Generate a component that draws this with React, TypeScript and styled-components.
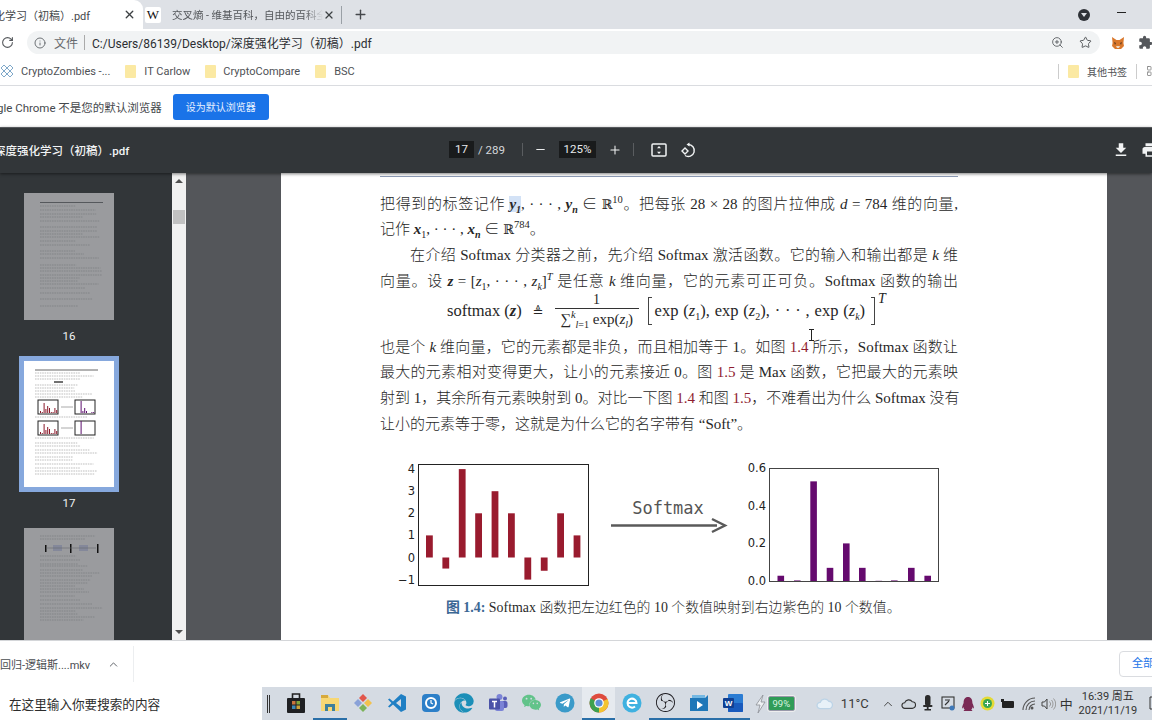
import React from "react";
import styled, { createGlobalStyle } from "styled-components";
import { Info, Plus, RotateCw, Star, X, ZoomIn, ChevronUp, Minus, LayoutGrid } from "lucide-react";
import { MdExtension, MdFileDownload, MdPrint } from "react-icons/md";
import { FaTelegramPlane, FaEdge } from "react-icons/fa";
import { SiObsstudio, SiWechat, SiTencentqq } from "react-icons/si";

const UI = `Roboto, "Noto Sans CJK SC", sans-serif`;
const SERIF = `"Liberation Serif", "Noto Sans CJK SC", serif`;

const Global = createGlobalStyle`
  html, body { margin: 0; padding: 0; width: 1152px; height: 720px; overflow: hidden; background: #fff; }
  * { box-sizing: border-box; }
  sub, sup { line-height: 0; }
`;
const Screen = styled.div`
  width: 1152px; height: 720px; overflow: hidden; display: flex; flex-direction: column; font-family: ${UI}; color: #3c4043;
`;

/* tab strip */
const TabStrip = styled.div`
  height: 29px; flex: none; background: #dee1e6; display: flex; align-items: center;
`;
const ActiveTab = styled.div`
  width: 143px; height: 29px; background: #fff; border-top-right-radius: 9px; display: flex; align-items: center; overflow: hidden; flex: none;
`;
const TabTitle = styled.span<{ $off?: number }>`
  font-size: 11px; color: #45484c; white-space: nowrap; width: 124px; margin-left: ${(p) => p.$off ?? 0}px; flex: none;
`;
const ActiveClose = styled(X)`
  flex: none; color: #3c4043; margin-left: 38px;
`;
const CloseIcon = styled(X)`
  flex: none; color: #3c4043;
`;
const WikiIcon = styled.span`
  width: 16px; height: 16px; margin-left: 1px; background: #fff; font: 13px/16px "Liberation Serif", serif; color: #111; text-align: center; flex: none; border-radius: 2px;
`;
const SecondTab = styled.div`
  width: 199px; height: 29px; display: flex; align-items: center; flex: none; margin-left: 1px;
`;
const FadedTitle = styled.span`
  font-size: 10.5px; color: #54575b; white-space: nowrap; width: 151px; margin-left: 11px; flex: none; overflow: hidden;
  -webkit-mask-image: linear-gradient(90deg, #000 88%, transparent);
  mask-image: linear-gradient(90deg, #000 88%, transparent);
`;
const TabDivider = styled.span`
  width: 1px; height: 18px; background: #9aa0a6; margin-left: 6px; flex: none;
`;
const NewTab = styled(Plus)`
  margin-left: 11px; color: #45484c; flex: none;
`;
const ProfileDot = styled.span`
  margin-left: auto; width: 12px; height: 12px; border-radius: 50%; background: #2f3237; display: flex; align-items: center; justify-content: center; flex: none;
  &::after { content: ""; border: 3px solid transparent; border-top: 4px solid #dee1e6; margin-top: 4px; }
`;
const WinMin = styled.span`
  width: 9px; height: 1px; background: #222; margin: 0 26px 4px 27px; flex: none;
`;

/* omnibox row */
const Toolbar = styled.div`
  height: 28px; flex: none; background: #fff; display: flex; align-items: center; padding-bottom: 1px;
`;
const Reload = styled(RotateCw)`
  margin-left: 1px; color: #55585c; flex: none;
`;
const Omnibox = styled.div`
  margin-left: 13px; width: 1073px; height: 23px; border-radius: 12px; background: #f1f3f4; display: flex; align-items: center; padding-left: 7px; flex: none;
`;
const InfoIcon = styled(Info)`
  color: #5f6368; flex: none;
`;
const Scheme = styled.span`
  font-size: 12px; color: #66696d; margin-left: 8px;
`;
const OmniSep = styled.span`
  width: 1px; height: 15px; background: #aaa; margin: 0 7px 0 6px;
`;
const Url = styled.span`
  font-size: 12px; color: #2b2e32; white-space: nowrap;
`;
const OmniRight = styled.span`
  margin-left: auto; display: flex; align-items: center; gap: 15px; padding-right: 8px; color: #55585c;
`;
const Puzzle = styled(MdExtension)`
  color: #55585c; margin-left: 13px; flex: none;
`;
const FoxBox = styled.svg`
  margin-left: 11px; flex: none;
`;

/* bookmarks */
const Bookmarks = styled.div`
  height: 29px; flex: none; background: #fff; border-bottom: 1px solid #dadce0; display: flex; align-items: center;
`;
const Mark = styled.span<{ $gap?: number; $small?: boolean }>`
  font-size: ${(p) => (p.$small ? 10 : 11)}px; color: #4e5155; margin-left: ${(p) => p.$gap ?? 8}px; white-space: nowrap; flex: none;
`;
const Folder = styled.span<{ $gap?: number }>`
  width: 11px; height: 13px; background: #fbe9a3; border-radius: 1px; margin-left: ${(p) => p.$gap ?? 15}px; flex: none;
`;
const BarSep = styled.span<{ $auto?: boolean; $gap?: number }>`
  width: 1px; height: 15px; background: #ccc; flex: none; margin-left: ${(p) => (p.$auto ? "auto" : `${p.$gap ?? 8}px`)};
`;
const AppsIcon = styled(LayoutGrid)`
  color: #777; margin: 0 -6px 0 9px; flex: none;
`;

/* infobar */
const InfoBar = styled.div`
  height: 41px; flex: none; background: #fff; display: flex; align-items: center; overflow: hidden;
`;
const InfoText = styled.span`
  font-size: 11.5px; color: #45484c; margin-left: -24px; white-space: nowrap; flex: none;
`;
const DefaultBtn = styled.span`
  margin-left: 11px; width: 96px; height: 26px; background: #1a73e8; border-radius: 3px; color: #e6f0ff; font-size: 10px; display: flex; align-items: center; justify-content: center; flex: none;
`;

/* pdf toolbar */
const PdfBar = styled.div`
  height: 46px; flex: none; background: #323639; border-top: 1px solid #55585c; padding-bottom: 2px; display: flex; align-items: center; color: #f1f3f4; box-shadow: 0 1px 3px rgba(0,0,0,.5); position: relative; z-index: 2;
`;
const PdfTitle = styled.span`
  width: 455px; font-size: 11.5px; font-weight: 500; margin-left: -6px; white-space: nowrap; flex: none;
`;
const NumBox = styled.span<{ $w: number }>`
  width: ${(p) => p.$w}px; height: 17px; background: #191b1c; font-size: 11.5px; line-height: 17px; text-align: center; flex: none; color: #e8eaed;
`;
const PageTotal = styled.span`
  font-size: 11.5px; margin-left: 4px; width: 44px; flex: none; color: #d5d7da;
`;
const PdfSep = styled.span<{ $l: number }>`
  width: 1px; height: 13px; background: #5a5d60; margin-left: ${(p) => p.$l}px; flex: none;
`;
const PdfIcon = styled.span<{ $l: number }>`
  margin-left: ${(p) => p.$l}px; display: flex; flex: none;
`;
const PdfRight = styled.span`
  margin-left: auto; margin-right: -7px; display: flex; align-items: center; gap: 11px; flex: none;
`;

/* viewer */
const Viewer = styled.div`
  height: 467px; flex: none; display: flex; background: #54565a; overflow: hidden;
`;
const Sidebar = styled.div`
  width: 172px; flex: none; background: #323639; display: flex; flex-direction: column; align-items: center; padding: 20px 34px 0 0; overflow: hidden;
`;
const ThumbWrap = styled.div<{ $sel?: boolean; $top?: number }>`
  width: 100px; height: 136px; flex: none; padding: 5px; background: ${(p) => (p.$sel ? "#86a8dd" : "transparent")}; margin-top: ${(p) => p.$top ?? 0}px;
`;
const ThumbLabel = styled.div<{ $mb: number }>`
  height: 14px; margin-top: ${(p) => p.$mb}px; font-size: 11.5px; line-height: 14px; color: #f1f3f4; flex: none; text-align: center;
`;
const ThumbSvg = styled.svg`
  display: block;
`;
const Scroll = styled.div`
  width: 14px; flex: none; background: #f1f1f1; display: flex; flex-direction: column; align-items: center;
`;
const Arrow = styled.span<{ $down?: boolean }>`
  flex: none; width: 0; height: 0; border-left: 4px solid transparent; border-right: 4px solid transparent;
  ${(p) => p.$down
    ? "border-top: 4px solid #505050; margin: auto 0 6px;"
    : "border-bottom: 4px solid #505050; margin-top: 6px;"}
`;
const ScrollThumb = styled.div`
  width: 12px; height: 14px; background: #c1c1c1; margin-top: 27px;
`;
const PageArea = styled.div`
  flex: 1; padding-left: 95px; min-width: 0;
`;
const Page = styled.div`
  width: 826px; height: 467px; background: #fff; padding: 3px 0 0 99px; position: relative; overflow: hidden;
`;
const Rule = styled.div`
  width: 578px; height: 1px; background: #8d9cb6; margin-bottom: 14.5px;
`;
const Line = styled.div<{ $j?: boolean; $indent?: boolean }>`
  width: 578px; height: 25.8px; line-height: 25.8px; font-family: ${SERIF}; font-size: 15px; font-weight: 300; color: #262626; white-space: nowrap;
  padding-left: ${(p) => (p.$indent ? 30 : 0)}px;
  ${(p) => p.$j ? "text-align: justify; text-align-last: justify;" : ""}
`;
const M = styled.i<{ $b?: boolean }>`
  font-family: "Liberation Serif", serif; font-style: italic; font-weight: ${(p) => (p.$b ? 700 : 400)};
`;
const Hi = styled.span`
  background: #d3e2f6;
`;
const Rm = styled.span`
  font-family: "DejaVu Serif", serif; font-size: 13px;
`;
const Ref = styled.span`
  color: #8f1d2f; font-family: "Liberation Serif", serif;
`;
const Sb = styled.sub`
  font-size: 10px; font-family: "Liberation Serif", serif;
`;
const Sp = styled.sup`
  font-size: 10.5px; font-family: "Liberation Serif", serif;
`;
const Formula = styled.div`
  height: 40px; width: 578px; display: flex; align-items: center; padding-left: 67px; font-family: "Liberation Serif", serif; font-size: 16.5px; color: #262626; white-space: pre; margin-top: -3.5px; margin-bottom: 3.5px;
`;
const Delta = styled.span`
  margin: 0 11px 0 11px; font-family: "DejaVu Sans", sans-serif; font-size: 13px;
`;
const Frac = styled.span`
  display: flex; flex-direction: column; align-items: center; width: 84px; flex: none;
`;
const Num = styled.span`
  height: 17px; line-height: 15px; border-bottom: 1px solid #333; width: 100%; text-align: center; font-size: 14px;
`;
const Den = styled.span`
  line-height: 20px; font-size: 15px; height: 21px;
`;
const Bracket = styled.span<{ $r?: boolean }>`
  width: 4px; height: 28px; border: 1px solid #444; flex: none;
  ${(p) => p.$r ? "border-left: none; margin-left: 6px;" : "border-right: none; margin: 0 3px 0 9px;"}
`;
const ExpRun = styled.span`
  word-spacing: .7px;
`;
const BigT = styled.i`
  align-self: flex-start; margin: 0 0 0 3px; font-size: 14px;
`;
const Chart = styled.svg`
  display: block; margin: 22.5px 0 0 20px; overflow: visible;
`;
const Caption = styled.div`
  margin: 6px 0 0 66px; font-family: ${SERIF}; font-size: 13.9px; color: #2a2a2a; white-space: nowrap; font-weight: 300;
`;
const CapLabel = styled.b`
  color: #3b6794; font-weight: 700;
`;
const Cursor = styled.svg`
  position: absolute; left: 527px; top: 156px;
`;

/* download bar */
const Downloads = styled.div`
  height: 47px; flex: none; background: #fff; border-top: 1px solid #d4d6d9; display: flex; align-items: center; overflow: hidden;
`;
const DlName = styled.span`
  font-size: 11px; color: #4a4d51; width: 107px; white-space: nowrap; flex: none;
`;
const DlChevron = styled(ChevronUp)`
  color: #5f6368; flex: none;
`;
const DlSep = styled.span`
  width: 1px; height: 36px; background: #eceef0; margin-left: 13px; flex: none;
`;
const AllBtn = styled.span`
  margin-left: auto; margin-right: -40px; width: 73px; height: 26px; border: 1px solid #dadce0; border-radius: 4px; font-size: 11px; color: #1a73e8; padding-left: 12px; line-height: 24px; flex: none;
`;

/* taskbar */
const Taskbar = styled.div`
  height: 33px; flex: none; background: #d5dbe3; display: flex; align-items: stretch; overflow: hidden;
`;
const Search = styled.div`
  width: 262px; background: #fff; font-size: 12.6px; color: #2c2c2c; padding-left: 9px; display: flex; align-items: center; flex: none;
`;
const TaskSep = styled.span`
  width: 3px; height: 18px; margin: 8px 9.5px 0 5px; border-left: 1px solid #333; border-right: 1px solid #333; flex: none;
`;
const Cell = styled.span<{ $on?: boolean; $run?: boolean }>`
  width: 33.6px; flex: none; display: flex; align-items: center; justify-content: center; position: relative;
  background: ${(p) => (p.$on ? "#e6eaef" : "transparent")};
  border-bottom: 2px solid ${(p) => (p.$run ? "#2a6fa8" : "transparent")};
`;
const Plane = styled(FaTelegramPlane)`
  position: absolute; color: #fff;
`;
const Tray = styled.span<{ $w: number; $c?: string; $pl?: number }>`
  width: ${(p) => p.$w}px; flex: none; padding-left: ${(p) => p.$pl ?? 0}px; display: flex; align-items: center; justify-content: center; color: ${(p) => p.$c ?? "#333"};
`;
const Temp = styled.span`
  font-size: 13px; color: #3a3a3a;
`;
const Ime = styled.span`
  font-size: 13px; color: #333;
`;
const Clock = styled.span`
  font-size: 11px; line-height: 13.5px; text-align: center; color: #333; white-space: nowrap; display: block;
`;
const Batt = styled.span`
  width: 27px; height: 15px; border: 1px solid #99a; border-radius: 2px; background: #2f9c57; color: #d8f5e0; font-size: 9.5px; line-height: 13px; text-align: center; flex: none; outline: 1px solid #eee;
`;

const rnd = (s: number) => ((Math.sin(s * 91.7) * 1000) % 1 + 1) % 1;
const textLines = (ys: number[], ink: string, x1 = 12, x2 = 78) =>
  ys.map((y, i) => (
    <line key={i} x1={x1} x2={x1 + (x2 - x1) * (0.55 + rnd(i + y) * 0.45)} y1={y} y2={y} stroke={ink} strokeWidth={0.7} strokeDasharray="1.600 .8" />
  ));

const Mini = ({ x, y, c, bars }: { x: number; y: number; c: string; bars: number[] }) => (
  <g>
    <rect x={x} y={y} width={20} height={14} fill="none" stroke="#222" strokeWidth={1} />
    {bars.map((h, i) => (
      <rect key={i} x={x + 2 + i * 1.8} y={y + 13 - h} width={1} height={h} fill={c} />
    ))}
  </g>
);
const RED = [2, 1, 10, 4, 7, 5, 1, 1, 5, 3];
const PUR = [0, 0, 12, 2, 5, 2, 0, 0, 1, 1];

const Thumb16 = () => (
  <ThumbSvg width={90} height={127}>
    <rect width={90} height={127} fill="#9a9b9e" />
    <line x1={16} x2={79} y1={9.5} y2={9.5} stroke="#55585c" />
    {textLines([13, 17, 21, 24, 28, 34, 38, 41, 44, 48, 52, 58, 61, 65, 72, 75, 78, 82, 85, 88, 91, 95, 100, 106, 113], "#7a7b7e", 16, 79)}
  </ThumbSvg>
);
const Thumb17 = () => (
  <ThumbSvg width={90} height={126}>
    <rect width={90} height={126} fill="#fff" />
    <line x1={11} x2={74} y1={9} y2={9} stroke="#666" />
    {textLines([12, 15, 18, 24, 27, 30, 33, 36], "#a3a3a3", 11, 74)}
    <line x1={30} x2={39} y1={21} y2={21} stroke="#111" strokeWidth={1.2} />
    <Mini x={14} y={39} c="#8c1a2b" bars={RED} />
    <Mini x={51} y={39} c="#5d0f6e" bars={PUR} />
    <line x1={37} x2={49} y1={46} y2={46} stroke="#aaa" />
    <Mini x={14} y={60} c="#8c1a2b" bars={RED} />
    <Mini x={51} y={60} c="#5d0f6e" bars={[0, 0, 13]} />
    <line x1={37} x2={49} y1={67} y2={67} stroke="#aaa" />
    {textLines([56, 77, 82, 85, 89, 92, 96, 99, 103, 107, 110, 113], "#a3a3a3", 11, 74)}
  </ThumbSvg>
);
const Thumb18 = () => (
  <ThumbSvg width={90} height={127}>
    <rect width={90} height={127} fill="#9a9b9e" />
    <rect x={21} y={17} width={1.5} height={7} fill="#111" />
    <rect x={46} y={16} width={1.5} height={9} fill="#111" />
    <rect x={73} y={16} width={1.5} height={9} fill="#111" />
    <rect x={29} y={17} width={9} height={6} fill="#84889a" />
    <rect x={55} y={17} width={9} height={6} fill="#84889a" />
    <line x1={22} x2={72} y1={20} y2={20} stroke="#66686c" strokeWidth={0.6} />
    {textLines([8, 11, 28, 32, 36, 38, 42, 45, 48, 52, 55, 58, 61, 64, 68, 72, 76, 80, 83, 86, 89, 92], "#7a7b7e", 16, 79)}
  </ThumbSvg>
);

const Left = () => {
  const x = [426, 442.4, 458.8, 475.2, 491.6, 508, 524.4, 540.8, 557.2, 573.6];
  const v = [1, -0.5, 4, 2, 3, 2, -1, -0.6, 2, 1];
  const Y = (n: number) => 97.5 - n * 22.1;
  return (
    <g>
      <rect x={18.5} y={4.5} width={170} height={121} fill="none" stroke="#222" />
      {v.map((n, i) => (
        <rect key={i} x={x[i] - 400} y={Math.min(Y(n), Y(0))} width={6.8} height={Math.abs(n) * 22.1} fill="#991b2e" />
      ))}
      {[4, 3, 2, 1, 0].map((n) => (
        <text key={n} x={15} y={Y(n) + 4} textAnchor="end" fontSize={11.5} fontFamily="DejaVu Sans" fill="#222">{n}</text>
      ))}
      <text x={15} y={Y(-1) + 4} textAnchor="end" fontSize={11.5} fontFamily="DejaVu Sans" fill="#222">−1</text>
    </g>
  );
};
const Right = () => {
  const x = [777.5, 794, 810.3, 826.7, 843, 859, 875.5, 891, 908, 924.4];
  const v = [0.028, 0.003, 0.53, 0.07, 0.2, 0.07, 0.001, 0.003, 0.07, 0.028];
  return (
    <g>
      <rect x={369.5} y={8.5} width={169} height={113} fill="none" stroke="#444" />
      {v.map((n, i) => (
        <rect key={i} x={x[i] - 400} y={121 - n * 188} width={6.6} height={n * 188} fill="#650a6e" />
      ))}
      {[[0.6, 8], [0.4, 46], [0.2, 83], [0.0, 121]].map(([l, y]) => (
        <text key={l} x={366} y={y + 4} textAnchor="end" fontSize={11.5} fontFamily="DejaVu Sans" fill="#222">{l.toFixed(1)}</text>
      ))}
    </g>
  );
};

const Fox = () => (
  <FoxBox width={14} height={14} viewBox="0 0 14 14">
    <path d="M1 1l4.500 3h3L13 1l-.6 6 .6 3-3 3H4l-3-3 .6-3z" fill="#d9772b" />
    <path d="M3 6l2 1-1 2zM11 6L9 7l1 2z" fill="#5c3a21" />
    <path d="M5 10h4l-1 2H6z" fill="#e9d9c6" />
  </FoxBox>
);
const FitIcon = () => (
  <svg width={16} height={14} viewBox="0 0 16 14" fill="none">
    <rect x="1" y="1" width="14" height="12" rx="1" stroke="#f1f3f4" strokeWidth="1.500" />
    <path d="M8 3l-2 2.200h4zM8 11l-2-2.200h4z" fill="#f1f3f4" />
  </svg>
);
const RotIcon = () => (
  <svg width={16} height={16} viewBox="0 0 16 16" fill="none" stroke="#f1f3f4" strokeWidth="1.400">
    <path d="M2 9l3-3 3 3-3 3z" />
    <path d="M8 2.500a6 6 0 1 1-3 11" />
    <path d="M9.500 .5L6.500 2.500l3 2" fill="#f1f3f4" stroke="none" />
  </svg>
);
const Store = () => (
  <svg width={20} height={22} viewBox="0 0 20 22">
    <path d="M6.500 6V2h7v4" fill="none" stroke="#222" strokeWidth="1.600" />
    <rect x="1" y="6" width="18" height="15" rx="1" fill="#1f2023" />
    <rect x="6" y="9" width="3.500" height="3.500" fill="#c9743d" />
    <rect x="10.500" y="9" width="3.500" height="3.500" fill="#7fa53c" />
    <rect x="6" y="13.500" width="3.500" height="3.500" fill="#3b88b5" />
    <rect x="10.500" y="13.500" width="3.500" height="3.500" fill="#c9a13a" />
  </svg>
);
const FolderApp = () => (
  <svg width={20} height={20} viewBox="0 0 20 20">
    <path d="M1 2h7l2 3h9v13H1z" fill="#f7d774" />
    <rect x="1" y="2" width="7" height="3" fill="#d7a93c" />
    <path d="M5 18v-7h10v7h-3v-4H8v4z" fill="#3f7f9c" />
  </svg>
);
const Pinwheel = () => (
  <svg width={20} height={20} viewBox="0 0 20 20">
    <path d="M10 1l4 4-4 4-4-4z" fill="#e2574c" />
    <path d="M15 6l4 4-4 4-4-4z" fill="#f2c14e" />
    <path d="M10 11l4 4-4 4-4-4z" fill="#7cb35a" />
    <path d="M5 6l4 4-4 4-4-4z" fill="#8aa2d8" />
  </svg>
);
const VsCode = () => (
  <svg width={20} height={20} viewBox="0 0 20 20">
    <path d="M14 1l5 2.500v13L14 19 6 11.500 2.500 14.500 1 13.500 4.500 10 1 6.500 2.500 5.500 6 8.500zM14 6l-5 4 5 4z" fill="#1f7fc4" fillRule="evenodd" />
  </svg>
);
const Teams = () => (
  <svg width={20} height={20} viewBox="0 0 20 20">
    <circle cx="11.500" cy="4" r="3" fill="#7b83d6" />
    <circle cx="17" cy="5.500" r="2" fill="#5a5fb8" />
    <rect x="13" y="8" width="6.500" height="7" rx="2" fill="#5a5fb8" />
    <rect x="7" y="8" width="9" height="10" rx="2" fill="#7b83d6" />
    <rect x="1" y="5.500" width="11" height="11" rx="1" fill="#4b53a8" />
    <path d="M4 8.500h5M6.500 8.500v6" stroke="#fff" strokeWidth="1.500" />
  </svg>
);
const Square = ({ c, t }: { c: string; t: string }) => (
  <svg width={20} height={20} viewBox="0 0 20 20">
    <rect x="1" y="1" width="18" height="18" rx="4" fill={c} />
    <circle cx="10" cy="10" r="5" fill="none" stroke="#fff" strokeWidth="2" />
    <path d="M10 7v3l2 1" stroke={t} strokeWidth="1.200" fill="none" />
  </svg>
);
const Tele = () => (
  <svg width={20} height={20} viewBox="0 0 20 20">
    <circle cx="10" cy="10" r="9.500" fill="#3a9ac9" />
  </svg>
);
const Chrome = () => (
  <svg width={20} height={20} viewBox="0 0 20 20">
    <circle cx="10" cy="10" r="9.500" fill="#de4b3e" />
    <path d="M10 10L1.800 5.300A9.500 9.500 0 0 0 10 19.500z" fill="#3da14f" />
    <path d="M10 10l8.600-4A9.500 9.500 0 0 1 10 19.500z" fill="#f3c431" />
    <circle cx="10" cy="10" r="4.800" fill="#fff" />
    <circle cx="10" cy="10" r="3.600" fill="#5b8fd8" />
  </svg>
);
const EBadge = () => (
  <svg width={20} height={20} viewBox="0 0 20 20">
    <circle cx="10" cy="10" r="9.500" fill="#3fb1e0" />
    <path d="M5.500 10h9a4.500 4.500 0 1 0-1.500 3.500" fill="none" stroke="#fff" strokeWidth="2" />
  </svg>
);
const Media = () => (
  <svg width={20} height={20} viewBox="0 0 20 20">
    <path d="M1 5h15l3-3v16H1z" fill="#1f77b8" />
    <path d="M3 2h13v3H3z" fill="#74b8e3" />
    <path d="M8 8l6 4-6 4z" fill="#fff" />
  </svg>
);
const Word = () => (
  <svg width={20} height={20} viewBox="0 0 20 20">
    <rect x="5" y="1" width="15" height="18" rx="1" fill="#2b7cd3" />
    <rect x="5" y="10" width="15" height="9" rx="1" fill="#185abd" />
    <rect x="0" y="5" width="11" height="10" rx="1" fill="#103f91" />
    <text x="5.500" y="13" fontSize="8" fontWeight="700" textAnchor="middle" fill="#fff" fontFamily="Liberation Sans">W</text>
  </svg>
);
const Bolt = () => (
  <svg width={11} height={20} viewBox="0 0 11 20" fill="#eef1f4" stroke="#8b8f95" strokeWidth=".8">
    <path d="M8 1L1 11h4l-2 8 7-11H6z" />
  </svg>
);
const CloudFill = ({ w, c, s }: { w: number; c: string; s: string }) => (
  <svg width={w} height={w * 0.75} viewBox="0 0 16 12" fill={c} stroke={s} strokeWidth="1.200">
    <path d="M4 11a3 3 0 0 1 0-6 4.500 4.500 0 0 1 8-1 3.500 3.500 0 0 1 0 7z" />
  </svg>
);
const Mic = () => (
  <svg width={11} height={17} viewBox="0 0 11 17" fill="#2b2b2b">
    <rect x="3" y="0" width="5.500" height="11" rx="2.500" />
    <rect x="1" y="10" width="9.500" height="2" rx="1" />
    <rect x="4.800" y="11" width="1.800" height="3" />
    <rect x="2.500" y="14" width="6.500" height="1.500" />
  </svg>
);
const Scr = () => (
  <svg width={14} height={15} viewBox="0 0 14 15" fill="none" stroke="#333" strokeWidth="1.100">
    <rect x="1" y="1" width="12" height="11" />
    <path d="M4 4h5M4 9l4-4" />
    <circle cx="11" cy="12" r="2.500" fill="#3e78b8" stroke="none" />
  </svg>
);
const Green = () => (
  <svg width={15} height={15} viewBox="0 0 15 15">
    <circle cx="7.500" cy="7.500" r="7" fill="#e4da35" />
    <circle cx="7.500" cy="7.500" r="4.500" fill="#3aa655" />
    <path d="M5 7.500h5M7.500 5v5" stroke="#fff" />
  </svg>
);
const BattTray = () => (
  <svg width={14} height={10} viewBox="0 0 14 10" fill="#222">
    <rect x="1" y="2" width="12" height="7" rx="1" />
    <rect x="0" y="0" width="3" height="3" />
  </svg>
);
const Wifi = () => (
  <svg width={14} height={14} viewBox="0 0 14 14" fill="none" stroke="#555" strokeWidth="1.100">
    <path d="M1 13A12 12 0 0 1 13 1M4 13a9 9 0 0 1 9-9M7 13a6 6 0 0 1 6-6" />
    <circle cx="10" cy="11" r="1.500" fill="#555" stroke="none" />
  </svg>
);
const Sound = () => (
  <svg width={15} height={14} viewBox="0 0 15 14" fill="none" stroke="#444" strokeWidth="1">
    <path d="M1 5h2.500L6 2v10L3.500 9H1z" />
    <path d="M8.500 4.500a3.500 3.500 0 0 1 0 5M10.500 3a6 6 0 0 1 0 8M12.500 1.500a8 8 0 0 1 0 11" stroke="#999" />
  </svg>
);
const Notify = () => (
  <svg width={12} height={16} viewBox="0 0 12 16" fill="none" stroke="#333">
    <path d="M1 1h10v12H1z" />
  </svg>
);
const IBeam = () => (
  <Cursor width={7} height={12} viewBox="0 0 7 12" fill="none" stroke="#222">
    <path d="M1 .5h5M3.500 .5v11M1 11.500h5" />
  </Cursor>
);

export default function App() {
  return (
    <Screen>
      <Global />
      <TabStrip>
        <ActiveTab>
          <TabTitle $off={-39}>深度强化学习（初稿）.pdf</TabTitle>
          <ActiveClose size={13} strokeWidth={2.500} />
        </ActiveTab>
        <SecondTab>
          <WikiIcon>W</WikiIcon>
          <FadedTitle>交叉熵 - 维基百科，自由的百科全书</FadedTitle>
          <CloseIcon size={12} strokeWidth={2.500} />
          <TabDivider />
          <NewTab size={15} strokeWidth={2.200} />
        </SecondTab>
        <ProfileDot />
        <WinMin />
      </TabStrip>
      <Toolbar>
        <Reload size={13} strokeWidth={2} />
        <Omnibox>
          <InfoIcon size={12} strokeWidth={1.800} />
          <Scheme>文件</Scheme>
          <OmniSep />
          <Url>C:/Users/86139/Desktop/深度强化学习（初稿）.pdf</Url>
          <OmniRight>
            <ZoomIn size={13} strokeWidth={1.600} />
            <Star size={13} strokeWidth={1.800} />
          </OmniRight>
        </Omnibox>
        <Fox />
        <Puzzle size={15} />
      </Toolbar>
      <Bookmarks>
        <svg width={15} height={14} viewBox="0 0 15 14" fill="none" stroke="#7fa8c9" strokeWidth="1">
          <path d="M7 4L4 1 1 4l3 3zM7 10l-3-3-3 3 3 3zM13 4l-3-3-3 3 3 3zM13 10l-3-3-3 3 3 3z" />
        </svg>
        <Mark $gap={6}>CryptoZombies -...</Mark>
        <Folder />
        <Mark>IT Carlow</Mark>
        <Folder />
        <Mark $gap={7}>CryptoCompare</Mark>
        <Folder />
        <Mark>BSC</Mark>
        <BarSep $auto />
        <Folder $gap={9} />
        <Mark $small>其他书签</Mark>
        <BarSep $gap={9} />
        <AppsIcon size={12} strokeWidth={1.500} />
      </Bookmarks>
      <InfoBar>
        <InfoText>Google Chrome 不是您的默认浏览器</InfoText>
        <DefaultBtn>设为默认浏览器</DefaultBtn>
      </InfoBar>
      <PdfBar>
        <PdfTitle>深度强化学习（初稿）.pdf</PdfTitle>
        <NumBox $w={25}>17</NumBox>
        <PageTotal>/ 289</PageTotal>
        <PdfSep $l={0} />
        <PdfIcon $l={11}><Minus size={13} strokeWidth={1.800} /></PdfIcon>
        <PdfIcon $l={12}><NumBox $w={37}>125%</NumBox></PdfIcon>
        <PdfIcon $l={12}><Plus size={14} strokeWidth={1.800} /></PdfIcon>
        <PdfSep $l={11} />
        <PdfIcon $l={17}><FitIcon /></PdfIcon>
        <PdfIcon $l={13}><RotIcon /></PdfIcon>
        <PdfRight>
          <MdFileDownload size={18} />
          <MdPrint size={18} />
        </PdfRight>
      </PdfBar>
      <Viewer>
        <Sidebar>
          <ThumbWrap $top={-5}><Thumb16 /></ThumbWrap>
          <ThumbLabel $mb={5}>16</ThumbLabel>
          <ThumbWrap $sel $top={13}><Thumb17 /></ThumbWrap>
          <ThumbLabel $mb={4}>17</ThumbLabel>
          <ThumbWrap $top={13}><Thumb18 /></ThumbWrap>
        </Sidebar>
        <Scroll>
          <Arrow />
          <ScrollThumb />
          <Arrow $down />
        </Scroll>
        <PageArea>
          <Page>
            <Rule />
            <Line $j>把得到的标签记作 <M $b><Hi>y<Sb>1</Sb></Hi></M>, · · · , <M $b>y<Sb>n</Sb></M> ∈ <Rm>ℝ</Rm><Sp>10</Sp>。把每张 28 × 28 的图片拉伸成 <M>d</M> = 784 维的向量,</Line>
            <Line>记作 <M $b>x</M><Sb>1</Sb>, · · · , <M $b>x<Sb>n</Sb></M> ∈ <Rm>ℝ</Rm><Sp>784</Sp>。</Line>
            <Line $j $indent>在介绍 Softmax 分类器之前，先介绍 Softmax 激活函数。它的输入和输出都是 <M>k</M> 维</Line>
            <Line $j>向量。设 <M $b>z</M> = [<M>z</M><Sb>1</Sb>, · · · , <M>z<Sb>k</Sb></M>]<Sp><M>T</M></Sp> 是任意 <M>k</M> 维向量，它的元素可正可负。Softmax 函数的输出</Line>
            <Formula>
              <span>softmax (<M $b>z</M>)</span>
              <Delta>≜</Delta>
              <Frac>
                <Num>1</Num>
                <Den>∑<Sp><M>k</M></Sp><Sb><M>l</M>=1</Sb> exp(<M>z<Sb>l</Sb></M>)</Den>
              </Frac>
              <Bracket />
              <ExpRun>exp (<M>z</M><Sb>1</Sb>), exp (<M>z</M><Sb>2</Sb>), · · · , exp (<M>z<Sb>k</Sb></M>)</ExpRun>
              <Bracket $r />
              <BigT>T</BigT>
            </Formula>
            <Line $j>也是个 <M>k</M> 维向量，它的元素都是非负，而且相加等于 1。如图 <Ref>1.4</Ref> 所示，Softmax 函数让</Line>
            <Line $j>最大的元素相对变得更大，让小的元素接近 0。图 <Ref>1.5</Ref> 是 Max 函数，它把最大的元素映</Line>
            <Line $j>射到 1，其余所有元素映射到 0。对比一下图 <Ref>1.4</Ref> 和图 <Ref>1.5</Ref>，不难看出为什么 Softmax 没有</Line>
            <Line>让小的元素等于零，这就是为什么它的名字带有 “Soft”。</Line>
            <Chart width={560} height={130} viewBox="0 0 560 130">
              <Left />
              <text x={268} y={54} fontSize={17} fontFamily="DejaVu Sans Mono" fill="#555" textAnchor="middle">Softmax</text>
              <path d="M211 65.500h106" stroke="#5a5a5a" strokeWidth={2.600} />
              <path d="M312 59l13 6.500-13 6.500" fill="none" stroke="#5a5a5a" strokeWidth={2.400} />
              <Right />
            </Chart>
            <Caption><CapLabel>图 1.4:</CapLabel> Softmax 函数把左边红色的 10 个数值映射到右边紫色的 10 个数值。</Caption>
            <IBeam />
          </Page>
        </PageArea>
      </Viewer>
      <Downloads>
        <DlName>回归-逻辑斯....mkv</DlName>
        <DlChevron size={13} strokeWidth={1.800} />
        <DlSep />
        <AllBtn>全部显示</AllBtn>
      </Downloads>
      <Taskbar>
        <Search>在这里输入你要搜索的内容</Search>
        <TaskSep />
        <Cell><Store /></Cell>
        <Cell $run><FolderApp /></Cell>
        <Cell><Pinwheel /></Cell>
        <Cell><VsCode /></Cell>
        <Cell><Square c="#2c7fc8" t="#fff" /></Cell>
        <Cell><FaEdge size={20} color="#1c8fb8" /></Cell>
        <Cell><Teams /></Cell>
        <Cell><SiWechat size={19} color="#62c38a" /></Cell>
        <Cell><Tele /><Plane size={12} /></Cell>
        <Cell $on $run><Chrome /></Cell>
        <Cell><EBadge /></Cell>
        <Cell $run><SiObsstudio size={19} color="#1c1a1f" /></Cell>
        <Cell $run><Media /></Cell>
        <Cell $run><Word /></Cell>
        <Tray $w={17} $pl={5}><Bolt /></Tray>
        <Tray $w={29}><Batt>99%</Batt></Tray>
        <Tray $w={46} $pl={12}><CloudFill w={17} c="#e8f1f8" s="#bcd3e6" /></Tray>
        <Tray $w={26}><Temp>11°C</Temp></Tray>
        <Tray $w={31} $pl={10} $c="#333"><ChevronUp size={14} strokeWidth={1.500} /></Tray>
        <Tray $w={19}><CloudFill w={15} c="#cfd6dd" s="#333" /></Tray>
        <Tray $w={20}><Mic /></Tray>
        <Tray $w={21}><Scr /></Tray>
        <Tray $w={19} $c="#7a2a55"><SiTencentqq size={14} /></Tray>
        <Tray $w={20}><Green /></Tray>
        <Tray $w={21}><BattTray /></Tray>
        <Tray $w={21}><Wifi /></Tray>
        <Tray $w={17}><Sound /></Tray>
        <Tray $w={19}><Ime>中</Ime></Tray>
        <Tray $w={64}><Clock>16:39 周五<br />2021/11/19</Clock></Tray>
        <Tray $w={30}><Notify /></Tray>
      </Taskbar>
    </Screen>
  );
}
